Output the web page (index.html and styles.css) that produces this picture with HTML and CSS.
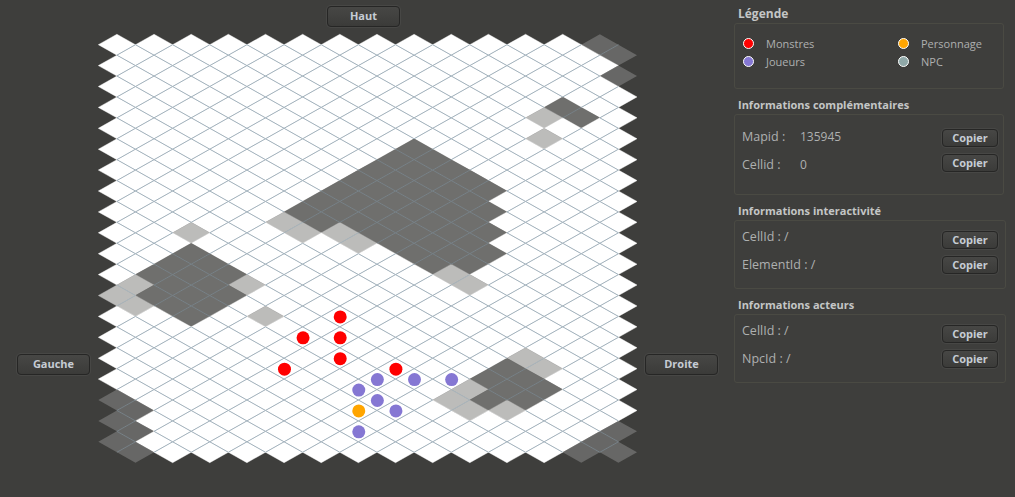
FILE: index.html
```html
<!DOCTYPE html>
<html lang="fr">
<head>
<meta charset="utf-8">
<title>Carte</title>
<link rel="stylesheet" href="styles.css">
</head>
<body>
<div class="app">
  <main class="stage">
    <div class="cell-top"><button class="btn btn-nav btn-haut">Haut</button></div>
    <div class="cell-left"><button class="btn btn-nav">Gauche</button></div>
    <svg id="map" class="map" width="547" height="434" viewBox="98 32 547 434"></svg>
    <div class="cell-right"><button class="btn btn-nav">Droite</button></div>
  </main>
  <aside class="side">
    <section class="group">
      <h2 class="title title-main">Légende</h2>
      <div class="panel panel-legend">
        <div class="legend">
          <div class="item"><span class="dot dot-red"></span>Monstres</div>
          <div class="item"><span class="dot dot-orange"></span>Personnage</div>
          <div class="item"><span class="dot dot-purple"></span>Joueurs</div>
          <div class="item"><span class="dot dot-teal"></span>NPC</div>
        </div>
      </div>
    </section>
    <section class="group">
      <h2 class="title">Informations complémentaires</h2>
      <div class="panel panel-info">
        <div class="row"><span class="label up1"><span class="key">Mapid :</span><span class="value">135945</span></span><button class="btn btn-copy">Copier</button></div>
        <div class="row"><span class="label down2"><span class="key">Cellid :</span><span class="value">0</span></span><button class="btn btn-copy">Copier</button></div>
      </div>
    </section>
    <section class="group wide">
      <h2 class="title">Informations interactivité</h2>
      <div class="panel panel-short">
        <div class="row"><span class="label up3">CellId : /</span><button class="btn btn-copy">Copier</button></div>
        <div class="row"><span class="label">ElementId : /</span><button class="btn btn-copy">Copier</button></div>
      </div>
    </section>
    <section class="group wide">
      <h2 class="title">Informations acteurs</h2>
      <div class="panel panel-short">
        <div class="row"><span class="label up3">CellId : /</span><button class="btn btn-copy">Copier</button></div>
        <div class="row"><span class="label">NpcId : /</span><button class="btn btn-copy">Copier</button></div>
      </div>
    </section>
  </aside>
</div>
<script src="map.js"></script>
</body>
</html>
```
FILE: styles.css
```css
* { box-sizing: border-box; }
html, body { margin: 0; height: 100%; }
body {
  background: #3e3e3c;
  font-family: "Open Sans", "Noto Sans", sans-serif;
  font-size: 12px;
  color: #aeb0b0;
  overflow: hidden;
}
.app { display: flex; height: 497px; }

.stage {
  display: grid;
  grid-template-columns: 98px 547px 73px;
  grid-template-rows: 32px 434px;
  width: 734px;
  flex: none;
}
.cell-top { grid-column: 2; grid-row: 1; padding: 6px 0 0 229px; }
.cell-left { grid-column: 1; grid-row: 2; padding: 322px 0 0 17px; }
.map { grid-column: 2; grid-row: 2; display: block; }
.cell-right { grid-column: 3; grid-row: 2; padding-top: 322px; }

.btn {
  display: block;
  padding: 0 0 2px;
  margin: 0;
  border: 1px solid #262625;
  border-radius: 4px;
  background: linear-gradient(#474745, #3b3b39);
  box-shadow: 0 0 0 1px rgba(255,255,255,.05);
  color: #c6ccd4;
  font: 700 11px/1 "Open Sans", "Noto Sans", sans-serif;
}
.btn-nav { width: 73px; height: 21px; }
.btn-copy { width: 56px; height: 18px; }

.side { width: 273px; flex: none; padding-top: 8px; }
.group { width: 270px; }
.group.wide { width: 272px; }
.title {
  margin: 0;
  padding-left: 4px;
  height: 15px;
  font-size: 11px;
  line-height: 11px;
  font-weight: 700;
  color: #c4c6c6;
}
.title-main { font-size: 12px; }
.panel {
  border: 1px solid #4a4a43;
  border-radius: 3px;
  margin-bottom: 10px;
  padding: 0 5px 0 7px;
}
.panel-legend { height: 66px; padding-top: 10px; padding-left: 8px; }
.panel-info { height: 81px; padding-top: 14px; }
.panel-short { height: 69px; padding-top: 10px; padding-right: 7px; }

.legend { display: grid; grid-template-columns: 155px 1fr; grid-auto-rows: 18px; font-size: 11px; }
.item { display: flex; align-items: center; }
.dot {
  width: 11px;
  height: 11px;
  border-radius: 50%;
  border: 1.5px solid #fff;
  margin-right: 12px;
  flex: none;
}
.dot-red { background: #ff0000; }
.dot-orange { background: #ffa500; }
.dot-purple { background: #8577d3; }
.dot-teal { background: #8fa8a8; }

.row {
  display: flex;
  justify-content: space-between;
  align-items: center;
  height: 18px;
  margin-bottom: 7px;
}
.label { display: block; line-height: 14px; font-size: 12.5px; }
.key { display: inline-block; width: 58px; }
.value { font-size: 12px; }
.up1 { padding-bottom: 2px; }
.up3 { padding-bottom: 6px; }
.down2 { padding-top: 3px; }
```
FILE: map.js
```js
// Map of 40 rows x 14 columns of isometric cells. Cells are addressed by
// row and by half-column u (u has the parity of the row).
var X0 = 116.9, Y0 = 44.7, HW = 18.575, HH = 10.45;

var dark = {
  0:[26], 1:[27], 3:[27], 6:[24], 7:[25],
  10:[16], 11:[15,17], 12:[14,16,18], 13:[13,15,17,19], 14:[12,14,16,18,20],
  15:[11,13,15,17,19], 16:[10,12,14,16,18,20], 17:[11,13,15,17,19],
  18:[14,16,18,20], 19:[15,17,19], 20:[4,16,18,20], 21:[3,5,17,19],
  22:[2,4,6], 23:[3,5], 24:[2,4,6], 25:[3,5], 26:[4],
  31:[21], 32:[20,22], 33:[21,23], 34:[0,20,22], 35:[1],
  36:[0], 37:[1,27], 38:[0,26], 39:[1,25,27]
};
var light = {
  7:[23], 9:[23], 17:[9], 18:[4,10,12], 19:[13], 22:[18], 23:[1,7,19],
  24:[0], 25:[1], 26:[8], 30:[22], 31:[23], 33:[19], 34:[18], 35:[19,21]
};
var dots = [
  [26,12,'#ff0000'],[28,10,'#ff0000'],[28,12,'#ff0000'],[30,12,'#ff0000'],[31,9,'#ff0000'],[31,15,'#ff0000'],
  [32,14,'#8577d3'],[32,16,'#8577d3'],[32,18,'#8577d3'],[33,13,'#8577d3'],[34,14,'#8577d3'],[35,15,'#8577d3'],[37,13,'#8577d3'],
  [35,13,'#ffa500']
];

function kind(r, u) {
  if (r < 0 || r > 39) return null;
  var min = r % 2, max = min + 26;
  if (u < min || u > max) return null;
  if (dark[r] && dark[r].indexOf(u) >= 0) return 'd';
  if (light[r] && light[r].indexOf(u) >= 0) return 'l';
  return 'w';
}
var fills = { w: '#ffffff', d: '#6f6f6d', l: '#bcbcba' };
var edge = { w: '#a3b3be', d: '#788288', l: '#a9b5bc' };
var fillOut = '', lineOut = '';

for (var r = 0; r < 40; r++) {
  for (var u = r % 2; u <= r % 2 + 26; u += 2) {
    var x = X0 + u * HW, y = Y0 + r * HH, k = kind(r, u);
    var c = fills[k];
    var op = (k === 'd' && (u <= 1 || u >= 25) && (r < 4 || r > 33)) ? ' fill-opacity=".85"' : '';
    fillOut += '<polygon fill="' + c + '"' + op + ' stroke="' + c + '" stroke-width=".4" stroke-opacity="' + (op ? 0 : 1) + '" points="' +
      (x - HW) + ',' + y + ' ' + x + ',' + (y - HH) + ' ' + (x + HW) + ',' + y + ' ' + x + ',' + (y + HH) + '"/>';
    // lower-left and lower-right edges, drawn only between cells of one kind
    var a = kind(r + 1, u - 1), b = kind(r + 1, u + 1);
    if (a === k) lineOut += '<line x1="' + (x - HW) + '" y1="' + y + '" x2="' + x + '" y2="' + (y + HH) + '" stroke="' + edge[k] + '"/>';
    if (b === k) lineOut += '<line x1="' + (x + HW) + '" y1="' + y + '" x2="' + x + '" y2="' + (y + HH) + '" stroke="' + edge[k] + '"/>';
  }
}
var dotOut = dots.map(function (d) {
  return '<circle cx="' + (X0 + d[1] * HW + 0.4) + '" cy="' + (Y0 + d[0] * HH + 0.5) + '" r="6.5" fill="' + d[2] + '"/>';
}).join('');
document.getElementById('map').innerHTML = fillOut + lineOut + dotOut;
```
